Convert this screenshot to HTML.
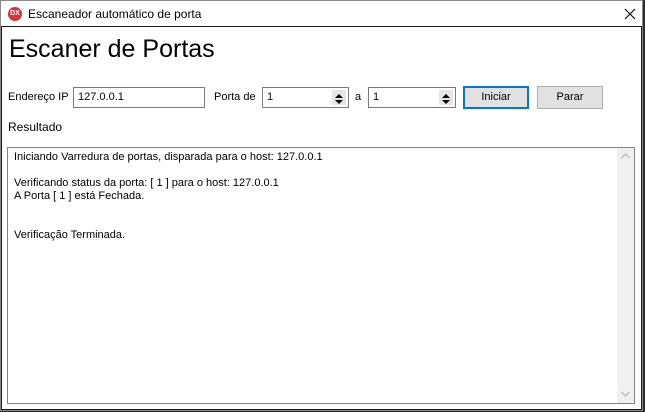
<!DOCTYPE html>
<html><head><meta charset="utf-8"><style>
*{margin:0;padding:0;box-sizing:border-box}
body{width:645px;height:412px;background:#2b2b2b;position:relative;overflow:hidden;font-family:"Liberation Sans",sans-serif;font-size:11px;color:#000}
.win{position:absolute;left:0;top:0;width:643px;height:411px;background:#fff;border:1px solid #8a8a8a}
.client{position:absolute;left:1px;top:26px;width:641px;height:384px;border:1px solid #1a1a1a;background:#fff}
.a{position:absolute}
.edit{position:absolute;height:21px;border:1px solid #7a7a7a;background:#fff;padding:3px 0 0 4px;font-size:11px}
.btn{position:absolute;height:23px;background:#e1e1e1;border:1px solid #adadad;text-align:center;line-height:21px;font-size:11px}
.spin{position:absolute;right:2px;top:2px;width:14px;height:15px;background:#e6e6e6}
.spin div{height:7px;position:relative}
</style></head><body>
<div class="win">
 <div class="a" style="left:7px;top:6px;width:14px;height:14px;border-radius:50%;background:#d8323c;color:#fff;font-size:7px;line-height:14px;text-align:center;font-weight:bold">DX</div>
 <div class="a" style="left:27px;top:6px;font-size:12px">Escaneador automático de porta</div>
 <svg class="a" style="left:623px;top:7px" width="12" height="12"><path d="M1 1L11 11M11 1L1 11" stroke="#000" stroke-width="1.1"/></svg>
</div>
<div class="client"></div>
<div class="a" style="left:9px;top:35px;font-size:25px">Escaner de Portas</div>
<div class="a" style="left:8px;top:91px">Endereço IP</div>
<div class="edit" style="left:73px;top:87px;width:132px">127.0.0.1</div>
<div class="a" style="left:214px;top:91px">Porta de</div>
<div class="edit" style="left:262px;top:87px;width:87px">1<div class="spin"><div><svg width="14" height="7"><path d="M3 6h8L7 2z" fill="#000"/></svg></div><div><svg width="14" height="7"><path d="M3 1h8L7 5z" fill="#000"/></svg></div></div></div>
<div class="a" style="left:355px;top:91px">a</div>
<div class="edit" style="left:368px;top:87px;width:88px">1<div class="spin"><div><svg width="14" height="7"><path d="M3 6h8L7 2z" fill="#000"/></svg></div><div><svg width="14" height="7"><path d="M3 1h8L7 5z" fill="#000"/></svg></div></div></div>
<div class="btn" style="left:463px;top:86px;width:66px;border:2px solid #0078d7;line-height:19px">Iniciar</div>
<div class="btn" style="left:537px;top:86px;width:66px">Parar</div>
<div class="a" style="left:8px;top:120px;font-size:12px">Resultado</div>
<div class="a" style="left:7px;top:147px;width:628px;height:257px;border:1px solid #828282;background:#fff">
 <div class="a" style="left:6px;top:3px;line-height:13px;white-space:pre">Iniciando Varredura de portas, disparada para o host: 127.0.0.1

Verificando status da porta: [ 1 ] para o host: 127.0.0.1
A Porta [ 1 ] está Fechada.


Verificação Terminada.</div>
 <div class="a" style="right:0;top:0;width:17px;height:255px;background:#f0f0f0">
  <svg class="a" style="left:4px;top:5px" width="9" height="6"><path d="M0.5 5L4.5 1L8.5 5" stroke="#c0c0c0" stroke-width="1.5" fill="none"/></svg>
  <svg class="a" style="left:4px;top:243px" width="9" height="6"><path d="M0.5 1L4.5 5L8.5 1" stroke="#c0c0c0" stroke-width="1.5" fill="none"/></svg>
 </div>
</div>
</body></html>
